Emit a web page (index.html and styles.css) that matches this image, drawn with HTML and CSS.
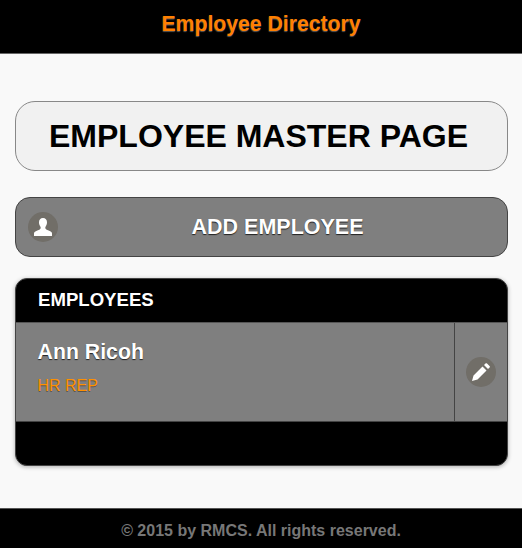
FILE: index.html
```html
<!DOCTYPE html>
<html lang="en">
<head>
    <meta charset="UTF-8">
    <meta name="viewport" content="width=device-width, initial-scale=1.0">
    <title>Employee Directory</title>
    <link rel="stylesheet" href="styles.css">
</head>
<body>
    <header class="top-bar">
        <h1>Employee Directory</h1>
    </header>
    <main class="content">
        <h2 class="page-title">EMPLOYEE MASTER PAGE</h2>
        <a class="add-button" href="#">
            <span class="icon-disc">
                <svg viewBox="0 0 18 18" width="18" height="18"><path fill="#fff" d="M9 0C6.500 0 5 1.700 5 4.300c0 1.700.5 3.100 1.300 4.100.5.700.5 1.700.1 2.400C5.800 11.900 4 12.400 1.800 13.200.6 13.700 0 14.500 0 15.500V18h18v-2.500c0-1-.6-1.800-1.800-2.300-2.200-.8-4-1.300-4.600-2.400-.4-.7-.4-1.700.1-2.400.8-1 1.300-2.400 1.300-4.100C13 1.700 11.500 0 9 0z"/></svg>
            </span>
            <span class="add-label">ADD EMPLOYEE</span>
        </a>
        <section class="employee-list">
            <div class="list-header">EMPLOYEES</div>
            <div class="list-row">
                <a class="row-main" href="#">
                    <span class="emp-name">Ann Ricoh</span>
                    <span class="emp-role">HR REP</span>
                </a>
                <a class="row-edit" href="#">
                    <span class="icon-disc">
                        <svg viewBox="0 0 18 18" width="18" height="18"><path fill="#fff" d="M10.500 3.500l4 4-9 9L0 18l1.500-5.500zM12 2L13.500.5c.5-.5 1-.5 1.500 0l2.500 2.500c.6.600.6 1.100.1 1.600L16 6z"/></svg>
                    </span>
                </a>
            </div>
            <div class="list-footer"></div>
        </section>
    </main>
    <footer class="bottom-bar">© 2015 by RMCS. All rights reserved.</footer>
</body>
</html>
```

FILE: styles.css
```css
body {
    font-family: "Liberation Sans", Arial, sans-serif;
    background-color: #f9f9f9;
    margin: 0;
    min-height: 548px;
    display: flex;
    flex-direction: column;
}
a {
    text-decoration: none;
    color: inherit;
}
.top-bar {
    background-color: #000;
    border-bottom: 1px solid #666;
    height: 53px;
    display: flex;
    align-items: center;
    justify-content: center;
}
.top-bar h1 {
    margin: 0;
    font-size: 21.2px;
    font-weight: bold;
    color: #ff8000;
    text-shadow: 0 1px 1px #555;
    position: relative;
    top: -3px;
}
.content {
    flex: 1;
    padding: 47px 14px 0 15px;
}
.page-title {
    margin: 0 0 26px;
    height: 68px;
    box-sizing: content-box;
    border: 1px solid #888;
    border-radius: 20px;
    background-color: #f1f1f1;
    color: #000;
    font-size: 32px;
    font-weight: bold;
    line-height: 68px;
    padding-left: 33px;
}
.add-button {
    display: flex;
    align-items: center;
    height: 58px;
    border: 1px solid #444;
    border-radius: 15px;
    background-color: #7f7f7f;
    padding-left: 12px;
    margin-bottom: 21px;
}
.icon-disc {
    width: 30px;
    height: 30px;
    border-radius: 50%;
    background-color: #716e68;
    display: flex;
    align-items: center;
    justify-content: center;
    flex: none;
}
.add-label {
    flex: 1;
    text-align: center;
    color: #fff;
    font-size: 21.5px;
    font-weight: bold;
    text-shadow: 0 1px 1px #222;
    padding-right: 10px;
}
.employee-list {
    background-color: #000;
    border: 1px solid #444;
    border-radius: 12px;
    box-shadow: 0 1px 4px rgba(0, 0, 0, 0.3);
    overflow: hidden;
}
.list-header {
    height: 43px;
    line-height: 41px;
    padding-left: 22px;
    color: #fff;
    font-size: 18.6px;
    font-weight: bold;
}
.list-row {
    display: flex;
    height: 98px;
    background-color: #7f7f7f;
    border-top: 1px solid #555;
    border-bottom: 1px solid #444;
}
.row-main {
    flex: 1;
    padding: 17px 0 0 21.500px;
    display: flex;
    flex-direction: column;
}
.emp-name {
    color: #fff;
    font-size: 21.300px;
    font-weight: bold;
    text-shadow: 0 1px 1px #222;
    line-height: 24px;
}
.emp-role {
    color: #ff9000;
    font-size: 16px;
    line-height: 18px;
    margin-top: 13px;
    text-shadow: 0 1px 0 #555;
}
.row-edit {
    width: 52px;
    border-left: 1px solid #444;
    display: flex;
    align-items: center;
    justify-content: center;
}
.list-footer {
    height: 43px;
}
.bottom-bar {
    background-color: #000;
    border-top: 1px solid #555;
    height: 39px;
    line-height: 44px;
    text-align: center;
    color: #777;
    font-size: 16px;
    font-weight: bold;
}
```
